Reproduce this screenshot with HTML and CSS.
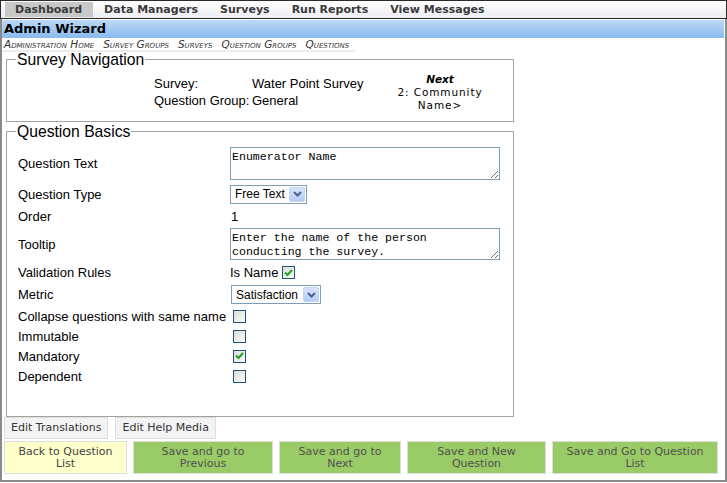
FILE: index.html
```html
<!DOCTYPE html>
<html>
<head>
<meta charset="utf-8">
<link rel="stylesheet" href="styles.css">
</head>
<body>
<div class="frame">
  <nav class="topnav">
    <a class="tab active">Dashboard</a>
    <a class="tab">Data Managers</a>
    <a class="tab">Surveys</a>
    <a class="tab">Run Reports</a>
    <a class="tab">View Messages</a>
  </nav>
  <div class="titlebar">Admin Wizard</div>
  <div class="crumbs">
    <a>Administration Home</a>
    <a>Survey Groups</a>
    <a>Surveys</a>
    <a>Question Groups</a>
    <a>Questions</a>
  </div>

  <fieldset class="box navbox">
    <legend>Survey Navigation</legend>
    <div class="navrow">
      <div class="info">
        <span>Survey:</span><span>Water Point Survey</span>
        <span>Question Group:</span><span>General</span>
      </div>
      <div class="next">
        <div class="next-title">Next</div>
        <div>2: Community</div>
        <div>Name&gt;</div>
      </div>
    </div>
  </fieldset>

  <fieldset class="box basics">
    <legend>Question Basics</legend>
    <div class="form">
      <div class="lbl">Question Text</div>
      <div class="val"><textarea class="ta ta1" readonly>Enumerator Name</textarea></div>

      <div class="lbl">Question Type</div>
      <div class="val"><span class="select sel1"><span class="sel-text">Free Text</span><span class="arrow"><svg width="9" height="6" viewBox="0 0 9 6"><path d="M1 1 L4.5 4.5 L8 1" fill="none" stroke="#4d6185" stroke-width="2"/></svg></span></span></div>

      <div class="lbl">Order</div>
      <div class="val val-order">1</div>

      <div class="lbl">Tooltip</div>
      <div class="val"><textarea class="ta ta2" readonly>Enter the name of the person conducting the survey.</textarea></div>

      <div class="lbl">Validation Rules</div>
      <div class="val val-rule">Is Name<span class="cb checked"><svg width="9" height="8" viewBox="0 0 9 8"><path d="M1 3.5 L3.5 6 L8 1" fill="none" stroke="#21a121" stroke-width="2"/></svg></span></div>

      <div class="lbl">Metric</div>
      <div class="val"><span class="select sel2"><span class="sel-text">Satisfaction</span><span class="arrow"><svg width="9" height="6" viewBox="0 0 9 6"><path d="M1 1 L4.5 4.5 L8 1" fill="none" stroke="#4d6185" stroke-width="2"/></svg></span></span></div>

      <div class="lbl">Collapse questions with same name</div>
      <div class="val"><span class="cb"></span></div>

      <div class="lbl">Immutable</div>
      <div class="val"><span class="cb"></span></div>

      <div class="lbl">Mandatory</div>
      <div class="val"><span class="cb checked"><svg width="9" height="8" viewBox="0 0 9 8"><path d="M1 3.5 L3.5 6 L8 1" fill="none" stroke="#21a121" stroke-width="2"/></svg></span></div>

      <div class="lbl">Dependent</div>
      <div class="val"><span class="cb"></span></div>
    </div>
  </fieldset>

  <div class="subtabs">
    <a class="subtab">Edit Translations</a>
    <a class="subtab">Edit Help Media</a>
  </div>

  <div class="actions">
    <a class="btn yellow b1">Back to Question List</a>
    <a class="btn green b2">Save and go to Previous</a>
    <a class="btn green b3">Save and go to Next</a>
    <a class="btn green b4">Save and New Question</a>
    <a class="btn green b5">Save and Go to Question List</a>
  </div>
</div>
</body>
</html>
```

FILE: styles.css
```css
* { box-sizing: border-box; }
html, body { margin: 0; padding: 0; background: #fff; }
body { font-family: "Liberation Sans", Arial, sans-serif; font-size: 13px; color: #000; }

.frame {
  width: 727px;
  height: 482px;
  border-left: 2px solid #8a8a8a;
  border-right: 2px solid #8a8a8a;
  border-bottom: 2px solid #8a8a8a;
}

.topnav {
  margin: 0 -2px;
  height: 19px;
  border: 1px solid #2a2a2a;
  background: linear-gradient(#ffffff, #ececf2);
  display: flex;
  align-items: stretch;
  padding: 1px 3px;
}
.tab {
  font-family: "DejaVu Sans", Verdana, sans-serif;
  font-weight: bold;
  font-size: 11px;
  color: #3a3a3a;
  padding: 0 11px 0 11px;
  line-height: 15px;
}
.tab.active { background: #c8c8c8; padding-left: 10px; margin-left: 1px; }

.titlebar {
  margin: 1px 1px 0 0;
  height: 18px;
  background: linear-gradient(#bcd8f6, #88bbee);
  font-family: "DejaVu Sans", Verdana, sans-serif;
  font-weight: bold;
  font-size: 13px;
  line-height: 18px;
  padding-left: 2px;
  color: #000;
}

.crumbs {
  display: flex;
  width: fit-content;
  gap: 9px;
  margin-top: 1px;
  padding: 0 6px 0 2px;
  border-bottom: 2px solid #ececec;
  font-family: "DejaVu Sans", Verdana, sans-serif;
  font-style: italic;
  font-variant: small-caps;
  font-size: 10.5px;
  line-height: 11px;
  color: #333;
}

.box {
  margin: 0 0 0 4px;
  width: 508px;
  border: 1px solid #a3a39c;
  padding: 0 10px;
}
.box legend {
  font-family: "Liberation Sans", Arial, sans-serif;
  font-size: 15.7px;
  padding: 0 1px;
  margin-left: -1px;
  line-height: 15px;
  color: #000;
}

.navbox { margin-top: 0; height: 70px; padding-top: 10px; }
.navrow { display: flex; align-items: flex-start; }
.info {
  display: grid;
  grid-template-columns: 98px 112px;
  row-gap: 3px;
  margin-left: 137px;
  font-size: 13px;
  line-height: 14px;
}
.next {
  margin-left: 31px;
  margin-top: -4px;
  width: 90px;
  text-align: center;
  font-family: "DejaVu Sans", Verdana, sans-serif;
  font-size: 10.5px;
  letter-spacing: 0.9px;
  line-height: 13px;
}
.next-title { font-weight: bold; font-style: italic; letter-spacing: 0; }

.basics { margin-top: 2px; height: 293px; padding-top: 6px; }
.form {
  display: grid;
  grid-template-columns: 212px auto;
  grid-template-rows: 37px 24px 20px 36px 21px 23px 20px 20px 20px 20px;
  align-items: center;
  margin-left: 1px;
}
.lbl { font-size: 13px; }
.val { display: flex; align-items: center; font-size: 13px; }
.val-order { padding-left: 1px; }

.ta {
  display: block;
  width: 270px;
  border: 1px solid #7f9db9;
  font-family: "Liberation Mono", "Courier New", monospace;
  font-size: 11.6px;
  line-height: 14px;
  padding: 2px 1px;
  margin: 0;
  color: #000;
  overflow: hidden;
  resize: both;
}
.ta1 { height: 33px; }
.ta2 { height: 32px; }

.select {
  display: inline-flex;
  align-items: center;
  border: 1px solid #7f9db9;
  background: #fff;
  height: 19px;
  padding: 0 1px 0 4px;
}
.sel1 { width: 77px; }
.sel2 { width: 90px; margin-left: 1px; }
.sel-text { flex: 1; font-size: 12px; white-space: nowrap; }
.arrow {
  flex: none;
  width: 16px;
  height: 15px;
  background: linear-gradient(#d6e3fd, #b5cbf7);
  border: 1px solid #c4d4f6;
  border-radius: 2px;
  display: flex;
  align-items: center;
  justify-content: center;
}

.cb {
  display: inline-flex;
  align-items: center;
  justify-content: center;
  width: 13px;
  height: 13px;
  border: 1px solid #1c5180;
  background: linear-gradient(135deg, #dcdcd7, #fbfbf9);
  margin-left: 3px;
}
.val-rule .cb { margin-left: 4px; }

.subtabs { display: flex; gap: 7px; margin: 0 0 0 2px; }
.subtab {
  height: 22px;
  border: 1px solid #dedede;
  background: #f3f3f3;
  font-family: "DejaVu Sans", Verdana, sans-serif;
  font-size: 11px;
  color: #333;
  line-height: 20px;
  padding: 0 6px;
}

.actions { display: flex; margin: 2px 0 0 2px; gap: 6px; }
.btn {
  height: 33px;
  border: 1px solid #dedede;
  display: flex;
  align-items: center;
  justify-content: center;
  text-align: center;
  font-family: "DejaVu Sans", Verdana, sans-serif;
  font-size: 11px;
  line-height: 12px;
  padding: 0 8px;
}
.yellow { background: #ffffcc; color: #444; }
.green { background: #99cc66; color: #505050; }
.b1 { width: 123px; padding: 0 12px; }
.b2 { width: 140px; padding: 0 24px; }
.b3 { width: 122px; padding: 0 16px; }
.b4 { width: 139px; padding: 0 22px; }
.b5 { width: 166px; padding: 0 12px; }
```
